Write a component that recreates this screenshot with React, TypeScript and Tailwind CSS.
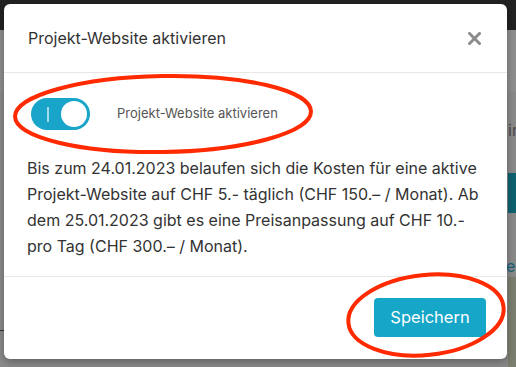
import React from "react";

export default function App() {
  return (
    <div
      className="relative w-[516px] h-[367px] overflow-hidden bg-[#8a8a8a]"
      style={{ fontFamily: "Inter, 'Noto Sans', sans-serif" }}
    >
      {/* background page (dimmed) */}
      <div className="absolute inset-x-0 top-0 h-[30px] bg-[#222222]" />
      <div className="absolute left-0 right-0 top-[30px] h-[62px] bg-[#8e8e8e]" />
      <div className="absolute left-[508px] top-[118px] text-[16px] text-[#4a4a4a]">ir</div>
      <div className="absolute left-[508px] top-[173px] w-[8px] h-[40px] bg-[#0f6170]" />
      <div className="absolute left-[506px] top-[254px] text-[16px] text-[#15607a]">es</div>
      <div className="absolute left-[508px] top-[277px] w-[8px] h-[90px] bg-[#7a7f6f]" />
      <div className="absolute left-0 top-[330px] w-[4px] h-[1px] bg-[#333]" />

      {/* modal */}
      <div className="absolute left-[4px] top-[4px] w-[503px] h-[355px] bg-white rounded-[6px] flex flex-col shadow-[0_3px_9px_rgba(0,0,0,0.3)]">
        <div className="h-[69px] flex items-center justify-between pl-[24px] pr-[26px] border-b border-[#e8e8e8]">
          <span className="text-[16px] text-[#333]">Projekt-Website aktivieren</span>
          <svg width="13" height="13" viewBox="0 0 13 13">
            <path d="M1.5 1.5 L11.5 11.5 M11.5 1.5 L1.5 11.5" stroke="#8c8c8c" strokeWidth="3" strokeLinecap="square" />
          </svg>
        </div>
        <div className="flex flex-col pt-[25px] pl-[23px] pr-[20px] pb-[17px] border-b border-[#e8e8e8]">
          <div className="flex items-center">
            <div className="relative w-[59px] h-[32px] rounded-full bg-[#19a4c9] ml-[4px] flex items-center justify-end pr-[3px]">
              <div className="absolute left-[16px] top-[9px] w-[2px] h-[15px] bg-white/60" />
              <div className="w-[26px] h-[26px] rounded-full bg-white" />
            </div>
            <span className="ml-[27px] text-[13px] text-[#555]">Projekt-Website aktivieren</span>
          </div>
          <p className="mt-[25px] text-[16px] leading-[26px] text-[#333]">
            Bis zum 24.01.2023 belaufen sich die Kosten für eine aktive Projekt-Website auf CHF 5.- täglich (CHF 150.– / Monat). Ab dem 25.01.2023 gibt es eine Preisanpassung auf CHF 10.- pro Tag (CHF 300.– / Monat).
          </p>
        </div>
        <div className="flex-1 flex justify-end items-start pt-[21px] pr-[21px]">
          <button className="w-[112px] h-[39px] rounded-[4px] bg-[#15a6c8] text-white text-[16.5px]">
            Speichern
          </button>
        </div>
      </div>

      {/* red annotations */}
      <svg className="absolute inset-0 pointer-events-none" width="516" height="367">
        <ellipse cx="163" cy="114" rx="148" ry="38" fill="none" stroke="#ff2a00" strokeWidth="4" transform="rotate(-1 163 114)" />
        <ellipse cx="426" cy="315" rx="78" ry="40" fill="none" stroke="#ff2a00" strokeWidth="4" transform="rotate(-6 426 315)" />
      </svg>
    </div>
  );
}
